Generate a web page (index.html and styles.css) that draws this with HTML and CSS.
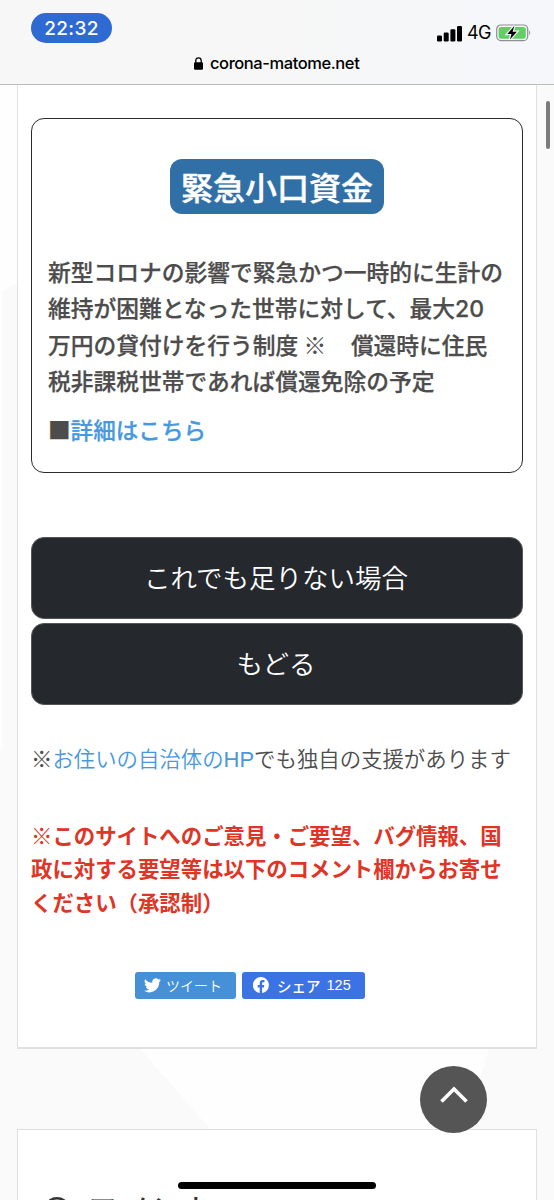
FILE: index.html
```html
<!DOCTYPE html>
<html lang="ja">
<head>
<meta charset="utf-8">
<title>corona-matome.net</title>
<link rel="stylesheet" href="styles.css">
</head>
<body>
<div class="screen">
  <svg class="backdrop" width="554" height="1200" viewBox="0 0 554 1200" aria-hidden="true">
    <path d="M2 292Q8 286 17 284V1048H139L211 1130H17V1200H0V750H2Z"/>
    <path d="M537 85H554V1200H537V1130H466L489 1048H537Z"/>
  </svg>
  <header class="browser-bar">
    <div class="status">
      <span class="clock">22:32</span>
      <div class="indicators">
        <svg width="26" height="17" viewBox="0 0 26 17"><rect x="0" y="10.5" width="5" height="6" rx="1.2"/><rect x="6.7" y="7.5" width="5" height="9" rx="1.2"/><rect x="13.4" y="4.3" width="5" height="12.2" rx="1.2"/><rect x="20" y="1" width="5" height="15.5" rx="1.2"/></svg>
        <span class="network">4G</span>
        <svg class="battery" width="36" height="18" viewBox="0 0 36 18">
          <rect x=".7" y="1" width="31" height="15.6" rx="4.2" fill="none" stroke="#8c8e8f" stroke-width="1.2"/>
          <rect x="2.6" y="2.9" width="27.2" height="11.8" rx="2.5" fill="#62cf66"/>
          <path d="M33.2 6.3q2 2.3 0 5z" fill="#8c8e8f"/>
          <path d="M18.300 2L11.300 10h4.200l-1.500 5.500 6.900-7.700h-4.300z" fill="#000" stroke="#f6f7f9" stroke-width="2.4" paint-order="stroke"/>
        </svg>
      </div>
    </div>
    <div class="address">
      <svg width="9" height="13" viewBox="0 0 9 13"><path d="M1.8 6V3.5a2.7 2.7 0 0 1 5.4 0V6" fill="none" stroke="#000" stroke-width="1.3"/><rect y="5.3" width="9" height="7.4" rx="1.2"/></svg>
      <span>corona-matome.net</span>
    </div>
  </header>
  <main class="page">
    <article class="panel">
      <section class="card">
        <h1 class="title">緊急小口資金</h1>
        <p class="summary">新型コロナの影響で緊急かつ一時的に生計の<br>維持が困難となった世帯に対して、最大<span class="num">20</span><br>万円の貸付けを行う制度 <span class="mark">※</span>　<span class="shift">償還時に住民</span><br>税非課税世帯であれば償還免除の予定</p>
        <p class="detail"><span class="square">■</span><a>詳細はこちら</a></p>
      </section>
      <nav class="actions">
        <a class="button">これでも足りない場合</a>
        <a class="button">もどる</a>
      </nav>
      <p class="note">※<a>お住いの自治体の<span class="latin">HP</span></a>でも独自の支援があります</p>
      <p class="notice"><span class="mark">※</span>このサイトへのご意見・ご要望、バグ情報、国<br>政に対する要望等は以下のコメント欄からお寄せ<br>ください（承認制）</p>
      <div class="social">
        <a class="share tweet"><svg width="17" height="15" viewBox="0 0 24 20"><path d="M24 2.4a9.8 9.8 0 0 1-2.8.8A4.9 4.9 0 0 0 23.3.5a9.900 9.900 0 0 1-3.100 1.200 4.900 4.900 0 0 0-8.400 4.500A14 14 0 0 1 1.700 1a4.900 4.900 0 0 0 1.500 6.600A4.900 4.900 0 0 1 1 7v.100a4.900 4.900 0 0 0 3.900 4.800 5 5 0 0 1-2.200.1 4.900 4.900 0 0 0 4.600 3.400A9.900 9.900 0 0 1 0 17.500 14 14 0 0 0 21.500 5a10 10 0 0 0 2.500-2.600z"/></svg><span>ツイート</span></a>
        <a class="share facebook"><svg width="16" height="16" viewBox="0 0 16 16"><path d="M6.700 16v-5.600H4.700V8.100h2V6.300c0-2.100 1.200-3.200 3-3.200.9 0 1.700.1 1.700.1v2h-1c-1 0-1.300.6-1.300 1.200v1.700h2.200l-.4 2.300H9.100V16A8 8 0 1 0 6.700 16z"/></svg><b>シェア</b><span>125</span></a>
      </div>
    </article>
    <section class="panel comments">
      <h2 class="comments-title"><svg width="22" height="20" viewBox="0 0 22 20"><path d="M11 1.200c5.300 0 9.500 3.200 9.500 7.300s-4.200 7.300-9.500 7.300l-3-.4L3 18l1-4.500C2.400 12.200 1.500 10.400 1.500 8.500c0-4.100 4.200-7.300 9.500-7.300z" fill="none" stroke="#333" stroke-width="2.400"/></svg><span>コメント</span></h2>
    </section>
  </main>
  <div class="scrollbar"></div>
  <a class="to-top" aria-label="トップへ"><svg width="28" height="18" viewBox="0 0 28 18"><path d="M1.500 15.500L14 3 26.500 15.500" fill="none" stroke="#fff" stroke-width="3.600"/></svg></a>
  <div class="home-indicator"></div>
</div>
</body>
</html>
```

FILE: styles.css
```css
* { box-sizing: border-box; }
body, h1, h2, p { margin: 0; }
body { background: #fefefe; color: #4c4c4c; font-family: "Noto Sans CJK JP", sans-serif; }
.screen { position: relative; width: 554px; height: 1200px; overflow: hidden; }
.backdrop { position: absolute; inset: 0; fill: #fafafa; }
.browser-bar { position: relative; height: 85px; border-bottom: 1px solid #bbbcbe; background: linear-gradient(90deg, #f7f7f7 45%, #f5f7fa); font-family: Inter, sans-serif; color: #000; }
.status { display: flex; justify-content: space-between; padding: 13px 22px 0 31px; height: 50px; }
.clock { width: 81px; height: 30px; border-radius: 15px; background: #2f69d2; color: #fff; font-size: 19px; font-weight: 500; line-height: 31px; letter-spacing: .3px; text-align: center; }
.indicators { display: flex; align-items: center; height: 18px; margin-top: 11px; }
.network { width: 33px; padding-left: 4px; font-size: 18px; line-height: 18px; letter-spacing: -.7px; }
.address { display: flex; align-items: center; gap: 7px; padding-left: 194px; height: 26px; font-size: 16.500px; font-weight: 500; letter-spacing: -.42px; white-space: nowrap; }
.page { position: relative; padding: 0 17px; }
.panel { border: 1px solid #e0e0e0; background: #fff; width: 520px; }
.panel:first-child { height: 964px; border-top: 0; border-bottom-width: 2px; padding: 33px 13px 0; }
.card { width: 492px; height: 355px; border: 1.500px solid #2b2b2b; border-radius: 13px; padding: 40px 16px 0; white-space: nowrap; }
.title { width: 214px; height: 55px; margin: 0 auto; border-radius: 12px; background: #3170a6; color: #fff; font-size: 32px; font-weight: 500; -webkit-text-stroke: .4px; line-height: 54px; text-align: center; }
.summary { margin-top: 40px; font-size: 22.750px; line-height: 36.300px; font-weight: 500; -webkit-text-stroke: .25px; }
.num { font-family: Inter, sans-serif; font-size: 23px; line-height: 1; }
.shift { margin-left: 2px; }
.mark { font-weight: 400; -webkit-text-stroke: 0; }
.detail { margin-top: 13px; font-size: 22.600px; line-height: 36px; font-weight: 500; -webkit-text-stroke: .25px; }
a { color: #4699e0; }
.actions { display: flex; flex-direction: column; gap: 4px; margin-top: 64px; width: 492px; }
.button { height: 82px; border: 1.500px solid #55565a; border-radius: 13px; background: #25282d; color: #fff; font-size: 26.500px; font-weight: 350; line-height: 77px; text-align: center; padding-right: 2px; }
.note { margin-top: 35px; font-size: 21.400px; line-height: 36px; font-weight: 350; white-space: nowrap; }
.latin { font-family: "Liberation Sans", sans-serif; font-size: 22px; line-height: 1; }
.notice { margin-top: 42px; color: #df3526; font-size: 21.400px; line-height: 33.300px; font-weight: 700; white-space: nowrap; }
.social { display: flex; gap: 6px; margin: 54px 0 0 104px; }
.share { display: flex; align-items: center; height: 27px; border-radius: 3px; color: #fff; font-size: 14.500px; line-height: 25px; white-space: nowrap; }
.share svg { fill: #fff; }
.tweet { width: 101px; padding-left: 9px; gap: 5px; background: #4590d6; font-weight: 350; font-size: 14px; }
.facebook { width: 123px; padding-left: 11px; background: #3b73e4; }
.facebook b { margin-left: 8px; font-weight: 500; }
.facebook span { margin-left: 6px; font-family: "Liberation Sans", sans-serif; }
.comments { height: 90px; margin-top: 80px; overflow: hidden; }
.comments-title { display: flex; gap: 18px; padding: 54px 0 0 28px; color: #333; font-size: 32.500px; font-weight: 400; line-height: 48px; white-space: nowrap; }
.comments-title svg { flex: none; margin-top: 13px; }
.scrollbar { position: absolute; top: 101px; left: 546px; width: 4px; height: 48px; border-radius: 2px; background: #7b7b7b; }
.to-top { position: absolute; left: 420px; top: 1066px; width: 67px; height: 67px; border-radius: 50%; background: #555; display: flex; justify-content: center; padding-top: 20px; }
.home-indicator { position: absolute; left: 178px; top: 1182px; width: 198px; height: 7px; border-radius: 4px; background: #000; }
```
